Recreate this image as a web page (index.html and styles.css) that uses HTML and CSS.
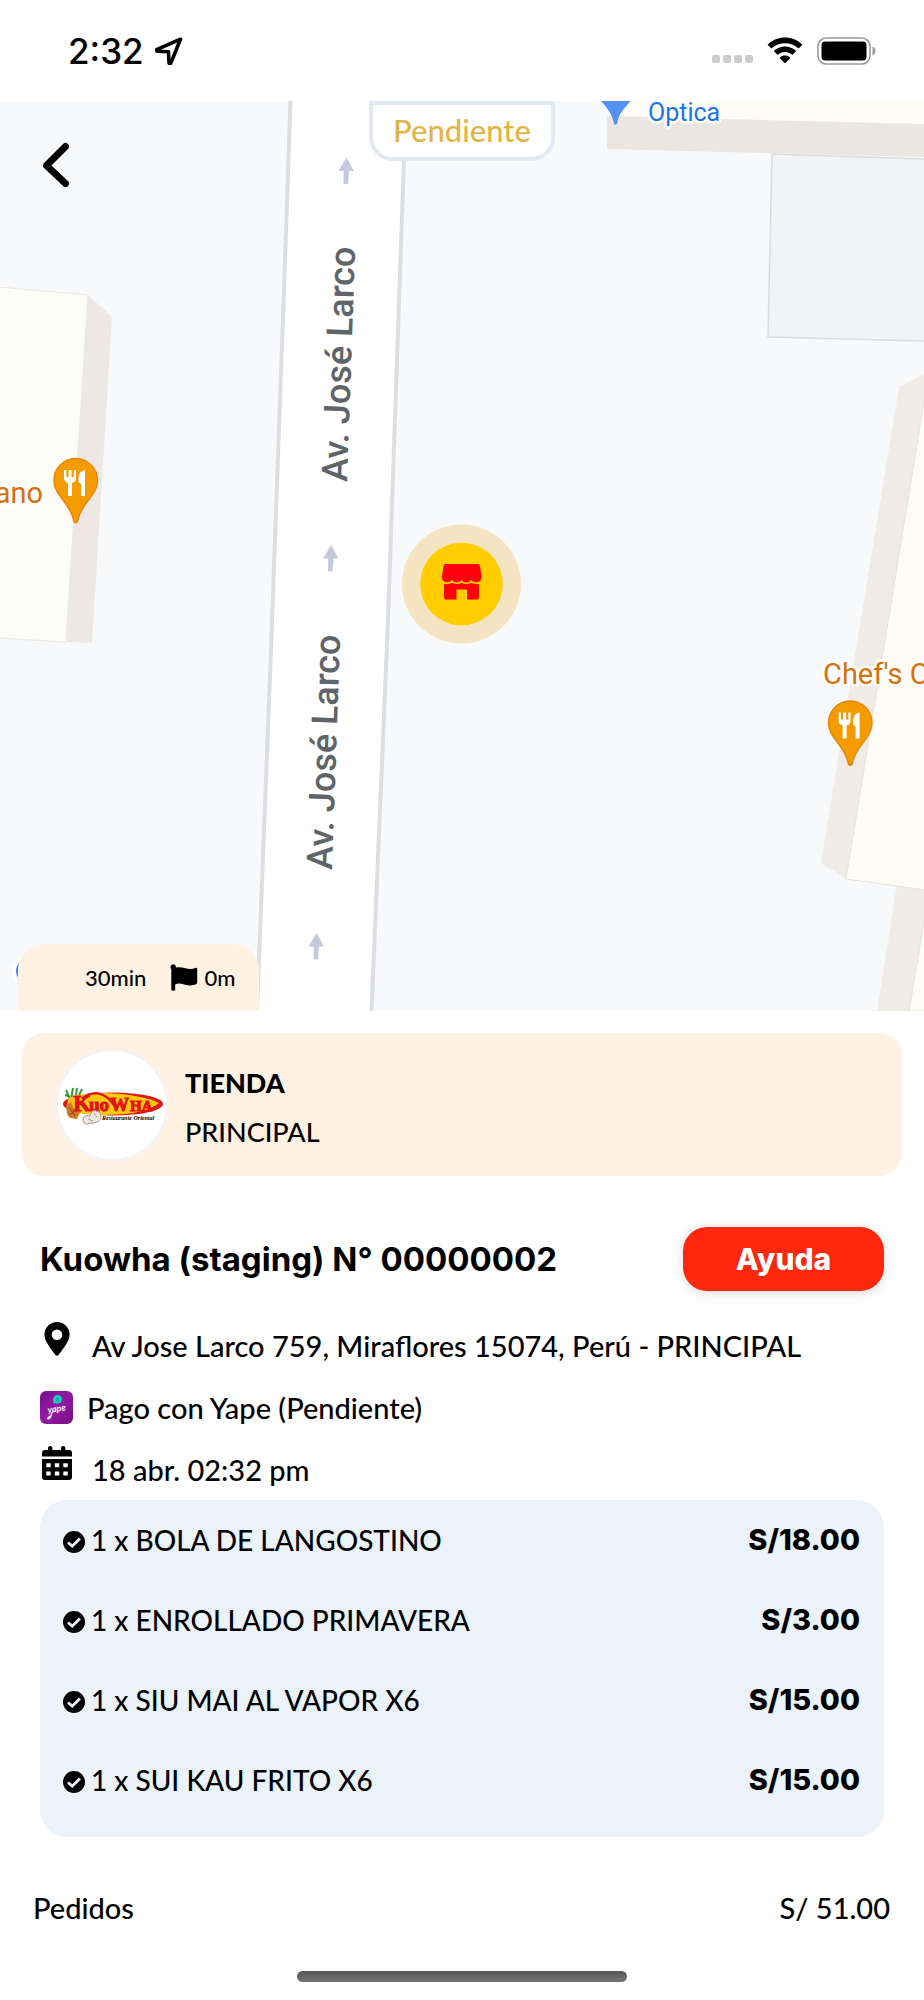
FILE: index.html
```html
<!DOCTYPE html>
<html lang="es">
<head>
<meta charset="utf-8">
<meta name="viewport" content="width=device-width, initial-scale=1">
<title>Pedido</title>
<link rel="stylesheet" href="styles.css">
</head>
<body>
<header class="status">
  <div class="status-left">
    <span class="clock">2:32</span>
    <svg class="loc" width="28" height="28" viewBox="0 0 28 28" aria-hidden="true"><path d="M25.5 2.2 2.2 12.4c-1 .6-.7 1.7.3 1.8l11 .6.5 10.800c.1 1.200 1.400 1.300 1.900.3z" fill="none" stroke="#000" stroke-width="3.600" stroke-linejoin="round"/></svg>
  </div>
  <div class="status-right">
    <span class="dots"><i></i><i></i><i></i><i></i></span>
    <svg class="wifi" width="36" height="27" viewBox="0 0 36 27" aria-hidden="true"><path d="M.6 7.800C10 -1.800 26 -1.800 35.400 7.800L31.600 11.600C24 4.300 12 4.300 4.400 11.600zM6.800 14.100C13 8 23 8 29.200 14.100L25.400 17.900C21.300 14 14.700 14 10.600 17.900zM13 20.400C15.800 17.800 20.200 17.800 23 20.400Q23.400 21 22.900 21.500L18.700 25.800Q18 26.400 17.300 25.800L13.100 21.500Q12.600 21 13 20.400z"/></svg>
    <svg class="battery" width="60" height="28" viewBox="0 0 60 28" aria-hidden="true"><rect x="1" y="1" width="52" height="26" rx="8" fill="none" stroke="#999" stroke-width="1.600"/><rect x="4.500" y="4.500" width="45" height="19" rx="4" fill="#000"/><path d="M55.500 9.500q3 1.500 3 4.500t-3 4.500z" fill="#999"/></svg>
  </div>
</header>

<section class="map">
  <svg class="map-canvas" viewBox="0 101 924 910" role="img" aria-label="Mapa">
    <rect y="101" width="924" height="910" fill="#f8f9fb"/>
    <path d="M290 101 257 1011H372L406 101z" fill="#fff"/>
    <path d="M290.500 101 284 290 271 650 257 1011M406 101 388 620 371.500 1011" fill="none" stroke="#dcdee2" stroke-width="4"/>
    <path d="M88 295 112 317 92 643 66 642z" fill="#ede8e5"/>
    <path d="M-2 287 88 295 66 642-2 638z" fill="#fdfdf7" stroke="#e9e6e0"/>
    <path d="M607 101H924V157L607 149z" fill="#eae6e1"/>
    <path d="M607 101H925V124L607 116z" fill="#fdfdf6"/>
    <path d="M772 154 926 159V341L768 337z" fill="#f1f3f5" stroke="#d9dbdf" stroke-width="1.500"/>
    <path d="M924 374 899 387 821 863 846 879 924 500z" fill="#efece7"/>
    <path d="M897 884 877 1011H924V890z" fill="#efece7"/>
    <path d="M926 390 846 879 926 890z" fill="#fdfcf7" stroke="#e6e3de"/>
    <path d="M926 910 909 1011H926z" fill="#fdfcf7" stroke="#e6e3de"/>
    <g fill="#c5c9dc">
      <path id="way" d="M346.500 157.500 354 171H349L348 184H343.500L343.700 171H338.500z"/>
      <use href="#way" x="-15.500" y="387.500"/>
      <use href="#way" x="-30" y="775.500"/>
    </g>
    <text class="street" transform="translate(347 482) rotate(-88)">Av. José Larco</text>
    <text class="street" transform="translate(332 870) rotate(-88)">Av. José Larco</text>
    <text class="place food" x="43" y="503" text-anchor="end">ano</text>
    <text class="place food" x="823" y="684">Chef's C</text>
    <text class="place shop" x="648" y="121">Óptica</text>
    <path d="M601 101H630.500C623 110 618.500 114 617 123.500Q615.500 126 614 123.500C612 114 608 109 601 101z" fill="#5491f5"/>
    <g id="food-pin">
      <path d="M75.700 458.500A21.800 21.800 0 0 0 53.900 480.500C53.900 496 71 503 73.800 521.500Q75.700 524 77.600 521.500C80.500 503 97.500 496 97.500 480.500A21.800 21.800 0 0 0 75.700 458.500z" fill="#f49b00" stroke="#e88505" stroke-width="1.400"/>
      <path d="M64 470V478Q64 482 68 483V496H72V483Q76 482 76 478V470H73.800V477H71.500V470H68.600V477H66.300V470zM85 470Q79 471 78.500 478V482L81 484V496H85z" fill="#fff"/>
    </g>
    <use href="#food-pin" x="774.600" y="242.500"/>
    <circle cx="28" cy="971" r="16" fill="#fff"/>
    <circle cx="28" cy="971" r="12" fill="#4286f5"/>
    <circle cx="461.500" cy="584" r="59.500" fill="#f4e4c2"/>
    <circle cx="461.500" cy="584" r="41.300" fill="#ffcd00"/>
    <path transform="translate(0 -3.500)" d="M445 567.500H478Q479.500 567.500 480 569.500L481.500 580Q481.500 585.500 476.500 585.800 473 586 471 583.500 469 586 466.300 586 463.500 586 461.500 583.500 459.500 586 456.800 586 454 586 452 583.500 450 586 446.500 585.800 441.800 585.500 442 580L443.500 569.500Q444 567.500 445 567.500zM444 587.500Q449 588 452 586.500 456 588.500 461.500 586.500 467 588.500 471 586.500 475 588 479 587.500V601Q479 603 477 603H467V593H456.500V603H446Q444 603 444 601z" fill="#ff0009"/>
  </svg>
  <button class="back" type="button" aria-label="Volver"><svg width="28" height="46" viewBox="0 0 28 46" aria-hidden="true"><path d="M23.500 4.500 4.500 23.500 23.500 41.500" fill="none" stroke="#000" stroke-width="7" stroke-linecap="round" stroke-linejoin="round"/></svg></button>
  <div class="state">Pendiente</div>
  <div class="eta">
    <span>30min</span>
    <svg class="flag" width="28" height="27" viewBox="0 0 28 27" aria-hidden="true"><path d="M3.200.3A2.900 2.900 0 0 0 1.300 5.200V26.500H5.200V20.500C11 17 17 24 26 20.300Q27.200 19.700 27.200 18.500V5Q27.200 3.200 25.500 3.900C18 7 12 1.600 6 3.600Q6 .5 3.200.3z"/></svg>
    <span>0m</span>
  </div>
</section>

<main>
  <section class="store">
    <svg class="logo" width="112" height="112" viewBox="0 0 112 112" role="img" aria-label="Kuowha">
      <circle cx="56" cy="56" r="55" fill="#fff" stroke="#f2f2f8" stroke-width="2"/>
      <g stroke="#39963f" stroke-width="2" fill="none"><path d="M14 50 10 41M15 50 17 39M12 47 9 46M20 46 21 39M23 46 26 40"/></g>
      <ellipse cx="57" cy="55" rx="50" ry="11.500" fill="#e01414"/>
      <path d="M13 49C30 40 84 44 103 54 86 69 34 67 14 63Q9 55 13 49z" fill="#ffc90a"/>
      <path d="M26 50C36 41 48 42 58 56" fill="none" stroke="#e01414" stroke-width="2.500"/>
      <path d="M10 56 15 53 18 60 24 63 21 70 14 69 11 65z" fill="#cf7a25"/><path d="M13 58 19 67M18 63 13 66" stroke="#8e4712"/>
      <text class="logo-name" y="62"><tspan x="17" class="l1">K</tspan><tspan x="33" class="l2">uo</tspan><tspan x="54" class="l2">W</tspan><tspan x="74" class="l3">HA</tspan></text>
      <path d="M27 72Q27 65 34 67 36 60 40 62 45 62 45 69 42 75 34 74 29 77 27 72z" fill="#eee8e5" stroke="#a99692"/><path d="M32 70 37 72M38 64 41 68" stroke="#a99692"/>
      <text class="logo-sub" x="46" y="71">Restaurante Oriental</text>
    </svg>
    <div class="store-text">
      <strong>TIENDA</strong>
      <span>PRINCIPAL</span>
    </div>
  </section>

  <section class="order">
    <div class="order-head">
      <h1>Kuowha (staging) N° 00000002</h1>
      <button class="help" type="button">Ayuda</button>
    </div>
    <ul class="facts">
      <li><span class="fact-icon raised"><svg width="26" height="34" viewBox="0 0 26 34" aria-hidden="true"><path fill-rule="evenodd" d="M13 0A12.600 12.600 0 0 0 .4 12.600C.4 18 5 25 11.500 33Q13 34.600 14.500 33C21 25 25.600 18 25.600 12.600A12.600 12.600 0 0 0 13 0zM13 7.500A5.300 5.300 0 1 1 13 18.100 5.300 5.300 0 1 1 13 7.500z"/></svg></span><span>Av Jose Larco 759, Miraflores 15074, Perú - PRINCIPAL</span></li>
      <li class="tight"><span class="fact-icon"><svg width="33" height="33" viewBox="0 0 33 33" aria-hidden="true"><defs><linearGradient id="yp" x1="0" y1="0" x2="1" y2="1"><stop stop-color="#7a1290"/><stop offset=".5" stop-color="#9318a3"/><stop offset="1" stop-color="#751083"/></linearGradient></defs><rect width="33" height="33" rx="6" fill="url(#yp)"/><path d="M17.500 4A4.300 4.300 0 1 1 15.500 12L13.300 12.500 13.500 10A4.300 4.300 0 0 1 17.500 4z" fill="#18d5c2"/><path d="M16 10 19 6.500M15.500 8 17.500 7M17.500 10 19.500 9" stroke="#1583a0"/><text class="yape" x="8" y="22" transform="rotate(-8 8 22)">yape</text><path d="M12 21Q11 28 8 28 6.500 26.500 12 24.500" fill="none" stroke="#fff" stroke-width="1.300"/></svg></span><span>Pago con Yape (Pendiente)</span></li>
      <li><span class="fact-icon raised"><svg width="30" height="34" viewBox="0 0 30 34" aria-hidden="true"><path fill-rule="evenodd" d="M0 10.500V7Q0 4 3 4H6V2Q6 0 8.200 0T10.400 2V4H19V2Q19 0 21.200 0T23.400 2V4H27Q30 4 30 7V10.500zM0 13H30V31Q30 34 27 34H3Q0 34 0 31zM4.300 17.300V21.300H8.700V17.300zM12.800 17.300V21.300H17.200V17.300zM21.300 17.300V21.300H25.700V17.300zM4.300 25.400V29.500H8.700V25.400zM12.800 25.400V29.500H17.200V25.400zM21.300 25.400V29.500H25.700V25.400z"/></svg></span><span>18 abr. 02:32 pm</span></li>
    </ul>
    <ul class="items">
      <li><svg class="check" width="22" height="22" viewBox="0 0 22 22" aria-hidden="true"><circle cx="11" cy="11" r="11"/><path d="M5 11.500 9.200 15.200 17 7.500" fill="none" stroke="#ebf2f9" stroke-width="2.800"/></svg><span>1 x BOLA DE LANGOSTINO</span><b>S/18.00</b></li>
      <li><svg class="check" width="22" height="22" viewBox="0 0 22 22" aria-hidden="true"><circle cx="11" cy="11" r="11"/><path d="M5 11.500 9.200 15.200 17 7.500" fill="none" stroke="#ebf2f9" stroke-width="2.800"/></svg><span>1 x ENROLLADO PRIMAVERA</span><b>S/3.00</b></li>
      <li><svg class="check" width="22" height="22" viewBox="0 0 22 22" aria-hidden="true"><circle cx="11" cy="11" r="11"/><path d="M5 11.500 9.200 15.200 17 7.500" fill="none" stroke="#ebf2f9" stroke-width="2.800"/></svg><span>1 x SIU MAI AL VAPOR X6</span><b>S/15.00</b></li>
      <li><svg class="check" width="22" height="22" viewBox="0 0 22 22" aria-hidden="true"><circle cx="11" cy="11" r="11"/><path d="M5 11.500 9.200 15.200 17 7.500" fill="none" stroke="#ebf2f9" stroke-width="2.800"/></svg><span>1 x SUI KAU FRITO X6</span><b>S/15.00</b></li>
    </ul>
  </section>

  <div class="total"><span>Pedidos</span><span>S/ 51.00</span></div>
</main>
<div class="home-bar"></div>
</body>
</html>
```

FILE: styles.css
```css
* { box-sizing: border-box; }
body {
  margin: 0;
  background: #fff;
  color: #000;
  font-family: Lato, "Open Sans", sans-serif;
  font-size: 28px;
  font-weight: 500;
}
ul { list-style: none; margin: 0; padding: 0; }
svg { display: block; flex: none; }
button { border: 0; font-family: inherit; cursor: pointer; }

.status {
  display: flex;
  justify-content: space-between;
  align-items: center;
  height: 101px;
  padding: 0 47px 0 68px;
}
.status-left { display: flex; align-items: center; gap: 11px; }
.clock { font: 500 35px/44px Inter, sans-serif; }
.status-right { display: flex; align-items: center; }
.dots { display: flex; gap: 3px; padding-top: 17px; margin-right: 14px; }
.dots i { width: 8px; height: 8px; border-radius: 2px; background: #ccc; }
.wifi { margin-right: 14px; }

.map { position: relative; overflow: hidden; }
.map-canvas { width: 100%; height: auto; }
.street { font: 500 36px Roboto, sans-serif; fill: #5f6468; }
.place { font-family: Roboto, sans-serif; font-weight: 400; stroke: #fff; stroke-width: 5px; stroke-linejoin: round; paint-order: stroke; }
.food { font-size: 29px; fill: #d5700b; }
.shop { font-size: 25px; fill: #1c73e8; }
.back { position: absolute; left: 42px; top: 41px; padding: 0; background: none; }
.state {
  position: absolute;
  top: 0;
  left: 50%;
  transform: translateX(-50%);
  padding: 6px 20px 8px;
  border: 4px solid #e3e8f2;
  border-radius: 0 0 24px 24px;
  background: #fff;
  color: #e3b445;
  font-size: 31px;
  line-height: 38px;
}
.eta {
  position: absolute;
  left: 18px;
  bottom: 0;
  display: flex;
  align-items: center;
  height: 67px;
  padding: 0 24px 0 67px;
  border-radius: 26px 26px 0 0;
  background: #fff2e3;
  font-size: 22px;
}
.flag { margin: 0 6px 0 24px; }

.store {
  display: flex;
  align-items: center;
  gap: 17px;
  margin: 22px 22px 0;
  padding: 16px 34px 15px;
  border-radius: 22px;
  background: #fff2e3;
}
.logo-name { font-family: "Liberation Serif", serif; font-weight: 700; fill: #e01414; stroke: #e01414; stroke-width: 1px; }
.l1 { font-size: 23px; }
.l2 { font-size: 19px; }
.l3 { font-size: 15px; }
.logo-sub { font: italic 700 6px "Liberation Serif", serif; }
.store-text { display: flex; flex-direction: column; padding-top: 4px; font-size: 27px; line-height: 49px; }
.store-text strong { font-weight: 900; }

.order { padding: 51px 40px 0; }
.order-head { display: flex; justify-content: space-between; align-items: center; }
h1 { margin: 0; font: 700 33px/40px Inter, Lato, sans-serif; }
.help {
  min-width: 201px;
  padding: 12px 24px;
  border-radius: 24px;
  background: #ff270d;
  box-shadow: 0 2px 12px rgba(0, 0, 0, .15);
  color: #fff;
  font: 800 30px/40px Inter, Lato, sans-serif;
}
.facts { margin-top: 23px; font-size: 29px; }
.facts li { display: flex; align-items: center; gap: 19px; min-height: 62px; }
.facts .tight { gap: 14px; }
.fact-icon { display: flex; justify-content: center; flex: none; width: 33px; }
.raised { padding-bottom: 12px; }
.yape { font: italic 700 9px Lato, sans-serif; fill: #fff; }

.items { padding: 0 24px 17px 23px; border-radius: 27px; background: #ebf2f9; }
.items li { display: flex; align-items: center; gap: 6px; min-height: 80px; padding-bottom: 1px; }
.items b { margin-left: auto; font: 800 29px/40px Inter, Lato, sans-serif; }
.check { margin-top: 5px; }

.total {
  display: flex;
  justify-content: space-between;
  margin-top: 41px;
  padding: 0 34px 0 33px;
  font-size: 29px;
  line-height: 60px;
}
.home-bar {
  width: 330px;
  height: 11px;
  margin: 33px auto 0;
  border-radius: 6px;
  background: linear-gradient(#555, #757575);
}
```
